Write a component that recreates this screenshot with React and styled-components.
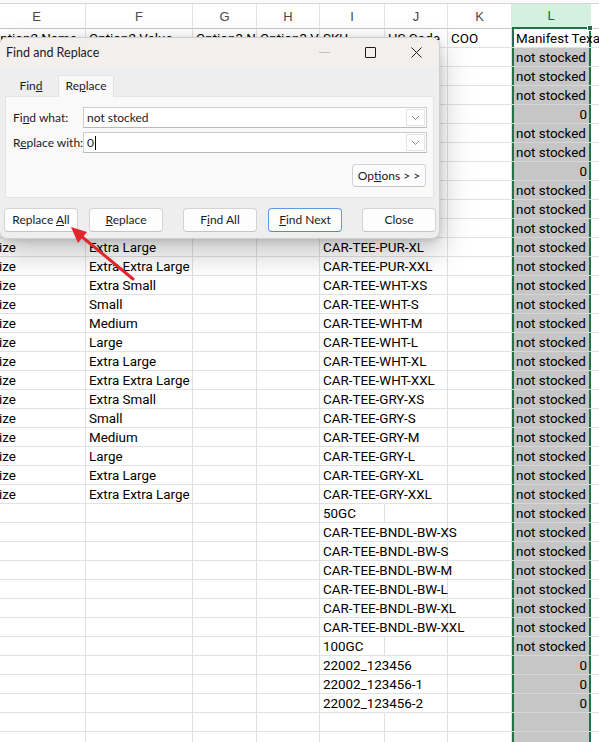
import React from "react";
import styled, { createGlobalStyle } from "styled-components";

const GlobalStyle = createGlobalStyle`
  * { box-sizing: border-box; }
  body {
    margin: 0;
    background: #fff;
    overflow: hidden;
  }
`;

// sheet columns E..M, E starts a bit left of the window
const COLS = { E: 98, F: 107, G: 64, H: 63, I: 65, J: 63, K: 64, L: 79, M: 40 };

const NS = "not stocked";

const ROWS = [
  { e: "Size", f: "Large", sku: "CAR-TEE-BLK-L", l: NS },
  { e: "Size", f: "Extra Large", sku: "CAR-TEE-BLK-XL", l: NS },
  { e: "Size", f: "Extra Extra Large", sku: "CAR-TEE-BLK-XXL", l: NS },
  { e: "", f: "", sku: "25GC", l: "0" },
  { e: "Size", f: "Extra Small", sku: "CAR-TEE-BLU-XS", l: NS },
  { e: "Size", f: "Small", sku: "CAR-TEE-BLU-S", l: NS },
  { e: "", f: "", sku: "22001_1", l: "0" },
  { e: "Size", f: "Small", sku: "CAR-TEE-PUR-S", l: NS },
  { e: "Size", f: "Medium", sku: "CAR-TEE-PUR-M", l: NS },
  { e: "Size", f: "Large", sku: "CAR-TEE-PUR-L", l: NS },
  { e: "Size", f: "Extra Large", sku: "CAR-TEE-PUR-XL", l: NS },
  { e: "Size", f: "Extra Extra Large", sku: "CAR-TEE-PUR-XXL", l: NS },
  { e: "Size", f: "Extra Small", sku: "CAR-TEE-WHT-XS", l: NS },
  { e: "Size", f: "Small", sku: "CAR-TEE-WHT-S", l: NS },
  { e: "Size", f: "Medium", sku: "CAR-TEE-WHT-M", l: NS },
  { e: "Size", f: "Large", sku: "CAR-TEE-WHT-L", l: NS },
  { e: "Size", f: "Extra Large", sku: "CAR-TEE-WHT-XL", l: NS },
  { e: "Size", f: "Extra Extra Large", sku: "CAR-TEE-WHT-XXL", l: NS },
  { e: "Size", f: "Extra Small", sku: "CAR-TEE-GRY-XS", l: NS },
  { e: "Size", f: "Small", sku: "CAR-TEE-GRY-S", l: NS },
  { e: "Size", f: "Medium", sku: "CAR-TEE-GRY-M", l: NS },
  { e: "Size", f: "Large", sku: "CAR-TEE-GRY-L", l: NS },
  { e: "Size", f: "Extra Large", sku: "CAR-TEE-GRY-XL", l: NS },
  { e: "Size", f: "Extra Extra Large", sku: "CAR-TEE-GRY-XXL", l: NS },
  { e: "", f: "", sku: "50GC", l: NS },
  { e: "", f: "", sku: "CAR-TEE-BNDL-BW-XS", l: NS },
  { e: "", f: "", sku: "CAR-TEE-BNDL-BW-S", l: NS },
  { e: "", f: "", sku: "CAR-TEE-BNDL-BW-M", l: NS },
  { e: "", f: "", sku: "CAR-TEE-BNDL-BW-L", l: NS },
  { e: "", f: "", sku: "CAR-TEE-BNDL-BW-XL", l: NS },
  { e: "", f: "", sku: "CAR-TEE-BNDL-BW-XXL", l: NS },
  { e: "", f: "", sku: "100GC", l: NS },
  { e: "", f: "", sku: "22002_123456", l: "0" },
  { e: "", f: "", sku: "22002_123456-1", l: "0" },
  { e: "", f: "", sku: "22002_123456-2", l: "0" },
  { e: "", f: "", sku: "", l: "" },
  { e: "", f: "", sku: "", l: "" },
];

const App = () => {
  return (
    <Page>
      <GlobalStyle />
      <Sheet>
        <HeadRow>
          {Object.keys(COLS).map((c) => (
            <HeadCell key={c} $w={COLS[c]} $sel={c === "L"}>
              {c === "M" ? "" : c}
              {c === "L" && <Handle />}
            </HeadCell>
          ))}
        </HeadRow>

        <Row>
          <Cell $w={COLS.E}>Option2 Name</Cell>
          <Cell $w={COLS.F}>Option2 Value</Cell>
          <Cell $w={COLS.G}>Option3 Name</Cell>
          <Cell $w={COLS.H}>Option3 Value</Cell>
          <Cell $w={COLS.I}>SKU</Cell>
          <Cell $w={COLS.J}>HS Code</Cell>
          <Cell $w={COLS.K}>COO</Cell>
          <SelCell $w={COLS.L} $active $spill>Manifest Texas</SelCell>
          <Cell $w={COLS.M} />
        </Row>

        {ROWS.map((r, i) => {
          const spill = r.sku.length > 9;
          return (
            <Row key={i}>
              <Cell $w={COLS.E}>{r.e}</Cell>
              <Cell $w={COLS.F}>{r.f}</Cell>
              <Cell $w={COLS.G} />
              <Cell $w={COLS.H} />
              <Cell $w={COLS.I} $spill={spill}>{r.sku}</Cell>
              <Cell $w={COLS.J} />
              <Cell $w={COLS.K} />
              <SelCell $w={COLS.L} $num={r.l === "0"}>{r.l}</SelCell>
              <Cell $w={COLS.M} />
            </Row>
          );
        })}
      </Sheet>

      <Dialog>
        <TitleBar>
          <Title>Find and Replace</Title>
          <WinControls>
            <WinBtn>
              <MinGlyph />
            </WinBtn>
            <WinBtn>
              <MaxGlyph />
            </WinBtn>
            <WinBtn>
              <svg width="11" height="11" viewBox="0 0 11 11">
                <path d="M0.5 0.5 L10.5 10.5 M10.5 0.5 L0.5 10.5" stroke="#1a1a1a" strokeWidth="1" fill="none" />
              </svg>
            </WinBtn>
          </WinControls>
        </TitleBar>

        <Body>
          <Tabs>
            <Tab $w={52}>
              Fin<u>d</u>
            </Tab>
            <Tab $w={56} $active>
              Re<u>p</u>lace
            </Tab>
          </Tabs>

          <Panel>
            <Field>
              <Label>
                Fi<u>n</u>d what:
              </Label>
              <Combo>
                <ComboText>not stocked</ComboText>
                <DropBtn>
                  <Chevron />
                </DropBtn>
              </Combo>
            </Field>
            <Field>
              <Label>
                R<u>e</u>place with:
              </Label>
              <Combo>
                <ComboText>
                  0<Caret />
                </ComboText>
                <DropBtn>
                  <Chevron />
                </DropBtn>
              </Combo>
            </Field>
            <OptionsRow>
              <Button $w={74} $h={23}>
                Op<u>t</u>ions &gt; &gt;
              </Button>
            </OptionsRow>
          </Panel>

          <ButtonRow>
            <Button>
              Replace <u>A</u>ll
            </Button>
            <Button $gap={11}>
              <u>R</u>eplace
            </Button>
            <Button $gap={20}>
              F<u>i</u>nd All
            </Button>
            <Button $gap={11} $primary>
              <u>F</u>ind Next
            </Button>
            <Button $gap={20}>Close</Button>
          </ButtonRow>
        </Body>
      </Dialog>

      <ArrowLayer viewBox="0 0 599 742">
        <line x1="133" y1="279" x2="81" y2="236" stroke="#e3262b" strokeWidth="3" strokeLinecap="round" />
        <polygon points="71,227 87,232 78,243" fill="#e3262b" />
      </ArrowLayer>
    </Page>
  );
};

export default App;

const Chevron = () => (
  <svg width="9" height="6" viewBox="0 0 9 6">
    <path d="M1 1 L4.5 4.5 L8 1" stroke="#8c8c8c" strokeWidth="1" fill="none" />
  </svg>
);

const Page = styled.div`
  position: relative;
  width: 599px;
  height: 742px;
  overflow: hidden;
  background: #fff;
`;

// ---- sheet ----
const Sheet = styled.div`
  margin-left: -12px;
  padding-top: 3px;
  background: #fafafa;
  font-family: Roboto, "Liberation Sans", sans-serif;
`;

const HeadRow = styled.div`
  display: flex;
  height: 26px;
  border-top: 1px solid #d6d6d6;
  background: #fff;
`;

const HeadCell = styled.div`
  position: relative;
  flex: none;
  width: ${(p) => p.$w}px;
  border-right: 1px solid ${(p) => (p.$sel ? "#d3f0e0" : "#e3e3e3")};
  border-bottom: ${(p) => (p.$sel ? "2px solid #217346" : "1px solid #c9c9c9")};
  background: ${(p) => (p.$sel ? "#d3f0e0" : "#fff")};
  color: ${(p) => (p.$sel ? "#0f6a35" : "#4a4a4a")};
  font: 13px "Liberation Sans", Arial, sans-serif;
  display: flex;
  align-items: center;
  justify-content: center;
`;

const Handle = styled.span`
  position: absolute;
  right: -3px;
  bottom: -4px;
  width: 6px;
  height: 6px;
  background: #217346;
  border: 1px solid #fff;
  z-index: 2;
`;

const Row = styled.div`
  display: flex;
  height: 19px;
  background: #fff;
`;

const Cell = styled.div`
  flex: none;
  width: ${(p) => p.$w}px;
  height: 19px;
  padding: 1px 3px 0 3px;
  border-right: 1px solid ${(p) => (p.$spill ? "transparent" : "#e1e1e1")};
  border-bottom: 1px solid #e1e1e1;
  font-size: 13.4px;
  line-height: 18px;
  color: #000;
  white-space: nowrap;
  overflow: ${(p) => (p.$spill ? "visible" : "hidden")};
  position: relative;
  z-index: ${(p) => (p.$spill ? 1 : 0)};
`;

const SelCell = styled(Cell)`
  padding: 1px 4px 0 4px;
  border-right: none;
  border-bottom: 1px solid ${(p) => (p.$active ? "#e1e1e1" : "#d6d6d6")};
  background: ${(p) => (p.$active ? "#fff" : "#c6c6c6")};
  text-align: ${(p) => (p.$num ? "right" : "left")};
  box-shadow: inset 2px 0 0 #217346, inset -2px 0 0 #217346;
`;

// ---- dialog ----
const Dialog = styled.div`
  position: absolute;
  left: -1px;
  top: 37px;
  width: 441px;
  height: 202px;
  display: flex;
  flex-direction: column;
  background: #eeeeee;
  border: 1px solid #cfcfcf;
  border-radius: 8px;
  overflow: hidden;
  box-shadow: 0 12px 32px rgba(0, 0, 0, 0.26), 0 2px 6px rgba(0, 0, 0, 0.12);
  font-family: Lato, "Liberation Sans", sans-serif;
  font-size: 12px;
  color: #1b1b1b;
  z-index: 5;

  u {
    text-decoration-thickness: 1px;
    text-underline-offset: 1px;
  }
`;

const TitleBar = styled.div`
  height: 29px;
  flex: none;
  display: flex;
  align-items: center;
  background: #f3efec;
  padding-left: 6px;
`;

const Title = styled.div`
  flex: 1;
  font-size: 12.5px;
`;

const WinControls = styled.div`
  display: flex;
  height: 100%;
`;

const WinBtn = styled.div`
  width: 46px;
  height: 100%;
  display: flex;
  align-items: center;
  justify-content: center;
`;

const MinGlyph = styled.span`
  width: 11px;
  height: 1px;
  background: #c2c2c2;
`;

const MaxGlyph = styled.span`
  width: 11px;
  height: 11px;
  border: 1px solid #1a1a1a;
  border-radius: 1px;
`;

const Body = styled.div`
  flex: 1;
  display: flex;
  flex-direction: column;
  padding: 8px 5px 6px 5px;
`;

const Tabs = styled.div`
  display: flex;
  height: 21px;
  gap: 1px;
`;

const Tab = styled.div`
  width: ${(p) => p.$w}px;
  line-height: 20px;
  text-align: center;
  background: ${(p) => (p.$active ? "#f9f9f9" : "transparent")};
  border: 1px solid ${(p) => (p.$active ? "#e4e4e4" : "transparent")};
  border-bottom: none;
  position: relative;
  z-index: 1;
  margin-bottom: -1px;
`;

const Panel = styled.div`
  height: 102px;
  flex: none;
  display: flex;
  flex-direction: column;
  gap: 4px;
  background: #f9f9f9;
  border: 1px solid #e4e4e4;
  padding: 10px 6px 0 7px;
`;

const Field = styled.div`
  display: flex;
  align-items: center;
  height: 21px;
`;

const Label = styled.div`
  width: 70px;
  flex: none;
  white-space: nowrap;
`;

const Combo = styled.div`
  flex: 1;
  height: 21px;
  display: flex;
  background: #fff;
  border: 1px solid #cdcdcd;
  border-bottom-color: #b9b9b9;
`;

const ComboText = styled.div`
  flex: 1;
  display: flex;
  align-items: center;
  padding-left: 3px;
`;

const Caret = styled.span`
  width: 1px;
  height: 14px;
  background: #000;
  margin-left: 1px;
`;

const DropBtn = styled.div`
  width: 19px;
  flex: none;
  display: flex;
  align-items: center;
  justify-content: center;
  border: 1px solid #e3e3e3;
  margin: 1px;
`;

const OptionsRow = styled.div`
  display: flex;
  justify-content: flex-end;
  margin-top: 7px;
  padding-right: 1px;
`;

const ButtonRow = styled.div`
  display: flex;
  margin-top: 10px;
  margin-left: -1px;
`;

const Button = styled.div`
  flex: none;
  width: ${(p) => p.$w || 74}px;
  height: ${(p) => p.$h || 24}px;
  line-height: ${(p) => (p.$h || 24) - 2}px;
  margin-left: ${(p) => p.$gap || 0}px;
  text-align: center;
  white-space: nowrap;
  background: #fdfdfd;
  border: 1px solid ${(p) => (p.$primary ? "#5b9be0" : "#d3d3d3")};
  border-bottom-color: ${(p) => (p.$primary ? "#4a8bd6" : "#c4c4c4")};
  border-radius: 4px;
  color: #1b1b1b;
`;

const ArrowLayer = styled.svg`
  position: absolute;
  left: 0;
  top: 0;
  width: 599px;
  height: 742px;
  pointer-events: none;
  z-index: 10;
`;
